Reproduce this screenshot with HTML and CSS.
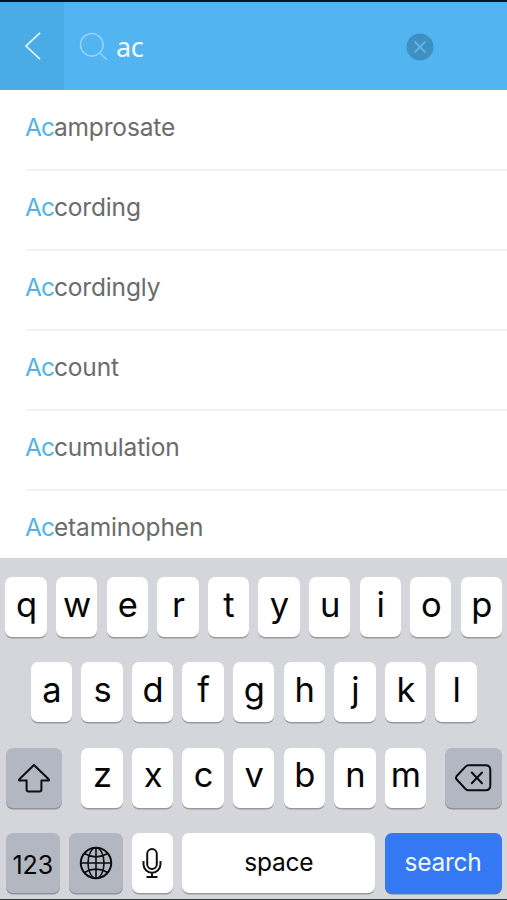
FILE: index.html
```html
<!DOCTYPE html>
<html lang="en">
<head>
<meta charset="utf-8">
<title>Search</title>
<link rel="stylesheet" href="styles.css">
</head>
<body>
<div class="screen">
  <header class="header">
    <div class="back">
      <svg width="18" height="30" viewBox="0 0 18 30" fill="none" stroke="#e4f5ff" stroke-width="1.7"><path d="M16 1.8 2 15 16 28.2"/></svg>
    </div>
    <div class="field">
      <svg class="glass" width="30" height="30" viewBox="0 0 30 30" fill="none" stroke="#92d3fb" stroke-width="1.6"><circle cx="12.8" cy="12.8" r="11.3"/><path d="m20.8 20.8 7.2 7.2"/></svg>
      <span class="query">ac</span>
      <svg class="clear" width="28" height="28" viewBox="0 0 28 28"><circle cx="14" cy="14" r="13.5" fill="#3f90c2"/><path d="m8.7 8.7 10.6 10.6M19.3 8.7 8.7 19.3" stroke="#64b6e8" stroke-width="1.8"/></svg>
    </div>
  </header>
  <main class="results">
    <div class="item"><b>Ac</b>amprosate</div>
    <div class="item"><b>Ac</b>cording</div>
    <div class="item"><b>Ac</b>cordingly</div>
    <div class="item"><b>Ac</b>count</div>
    <div class="item"><b>Ac</b>cumulation</div>
    <div class="item"><b>Ac</b>etaminophen</div>
  </main>
  <section class="keyboard">
    <div class="row">
      <div class="key"><span>q</span></div><div class="key"><span>w</span></div><div class="key"><span>e</span></div><div class="key"><span>r</span></div><div class="key"><span>t</span></div><div class="key"><span>y</span></div><div class="key"><span>u</span></div><div class="key"><span>i</span></div><div class="key"><span>o</span></div><div class="key"><span>p</span></div>
    </div>
    <div class="row">
      <div class="key"><span>a</span></div><div class="key"><span>s</span></div><div class="key"><span>d</span></div><div class="key"><span>f</span></div><div class="key"><span>g</span></div><div class="key"><span>h</span></div><div class="key"><span>j</span></div><div class="key"><span>k</span></div><div class="key"><span>l</span></div>
    </div>
    <div class="row">
      <div class="key dark shift">
        <svg width="34" height="32" viewBox="0 0 34 32" fill="none" stroke="#0b0d10" stroke-width="2" stroke-linejoin="round"><path d="M17 3 2.3 17.2Q1.5 18.6 3 18.6H9.6V27.5Q9.6 29.5 11.6 29.5H22.4Q24.4 29.5 24.4 27.5V18.6H31Q32.5 18.6 31.7 17.2Z"/></svg>
      </div>
      <div class="key"><span>z</span></div><div class="key"><span>x</span></div><div class="key"><span>c</span></div><div class="key"><span>v</span></div><div class="key"><span>b</span></div><div class="key"><span>n</span></div><div class="key"><span>m</span></div>
      <div class="key dark erase">
        <svg width="38" height="30" viewBox="0 0 38 30" fill="none" stroke="#0b0d10" stroke-width="2" stroke-linejoin="round" stroke-linecap="round"><path d="M14.5 2.3H31.5Q36.3 2.3 36.3 7V22.5Q36.3 27.3 31.5 27.3H14.5Q12.7 27.3 11.5 26L2.5 16.3Q1.3 14.8 2.5 13.3L11.5 3.6Q12.7 2.3 14.5 2.3Z"/><path d="m17.8 9.5 10.2 10.7M28 9.5 17.8 20.2"/></svg>
      </div>
    </div>
    <div class="row">
      <div class="key dark fn"><span class="num">123</span></div>
      <div class="key dark fn">
        <svg width="34" height="34" viewBox="0 0 34 34" fill="none" stroke="#0b0d10" stroke-width="1.6"><circle cx="17" cy="17" r="15.2" stroke-width="2"/><ellipse cx="17" cy="17" rx="8" ry="15.2"/><path d="M17 1.8V32.2M1.8 17H32.2M5.3 7.5Q17 14.2 28.7 7.5M5.3 26.5Q17 19.8 28.7 26.5"/></svg>
      </div>
      <div class="key mic">
        <svg width="22" height="32" viewBox="0 0 22 32" fill="none" stroke="#111" stroke-width="2"><rect x="6.2" y="2" width="9.6" height="20" rx="4.8"/><path d="M2.5 14V17.2A8.5 8.5 0 0 0 19.5 17.2V14M11 25.7V30M5.5 30H16.5"/></svg>
      </div>
      <div class="key space"><span class="word">space</span></div>
      <div class="key go"><span class="word">search</span></div>
    </div>
  </section>
</div>
</body>
</html>
```

FILE: styles.css
```css
* { box-sizing: border-box; }
body { margin: 0; font-family: Inter, "Liberation Sans", sans-serif; background: #fff; }
.screen { width: 507px; height: 900px; display: flex; flex-direction: column; overflow: hidden; border-top: 2px solid #08141b; border-bottom: 1px solid #3a3b3e; }
.header { height: 88px; flex: none; display: flex; background: #53b4f2; }
.back { width: 64px; padding: 29px 0 0 23.5px; background: #4aabe5; }
.back svg { display: block; }
.field { flex: 1; display: flex; align-items: center; padding: 0 73px 0 15px; }
.glass { flex: none; margin-top: 1px; }
.query { flex: 1; margin: 2px 0 0 7px; color: #f4fbff; font: 400 27px/36px "Noto Sans", sans-serif; letter-spacing: -0.3px; }
.clear { flex: none; margin-top: 1px; }
.results { height: 468px; flex: none; padding: 1px 0 0 26px; overflow: hidden; }
.item { height: 80px; padding-top: 20px; line-height: 32px; font-size: 24.5px; letter-spacing: -0.15px; text-indent: -1px; color: #6b6b6b; border-bottom: 2px solid #f0f0f0; white-space: nowrap; }
.item b { font-weight: 400; letter-spacing: -1px; color: #50b4ee; }
.keyboard { flex: 1; display: flex; flex-direction: column; gap: 25.4px; padding: 19px 5px 0 5.5px; background: #d4d6dc; }
.row { height: 60px; flex: none; display: flex; justify-content: center; gap: 9.2px; }
.key { width: 41.4px; flex: none; display: flex; align-items: center; justify-content: center; background: #fff; border-radius: 7px; box-shadow: 0 1.5px 0 #989a9f; color: #050505; font-size: 34.5px; font-weight: 400; line-height: 36px; }
.key span { margin: -5px 0 0 1px; }
.dark { background: #b2b7c1; box-shadow: 0 1.5px 0 #8f9299; }
.shift { width: 56.5px; margin-right: 9.7px; }
.erase { width: 56.5px; margin-left: 9.7px; }
.fn { width: 53.7px; }
.space { width: 193px; }
.go { width: 117px; color: #f2f8ff; background: #3478f3; box-shadow: 0 1.5px 0 #6c7890; }
.key .num { font-size: 25px; margin: 3px 0 0; }
.key .word { font-size: 24.5px; margin: -2px 0 0; letter-spacing: -0.25px; }
```
